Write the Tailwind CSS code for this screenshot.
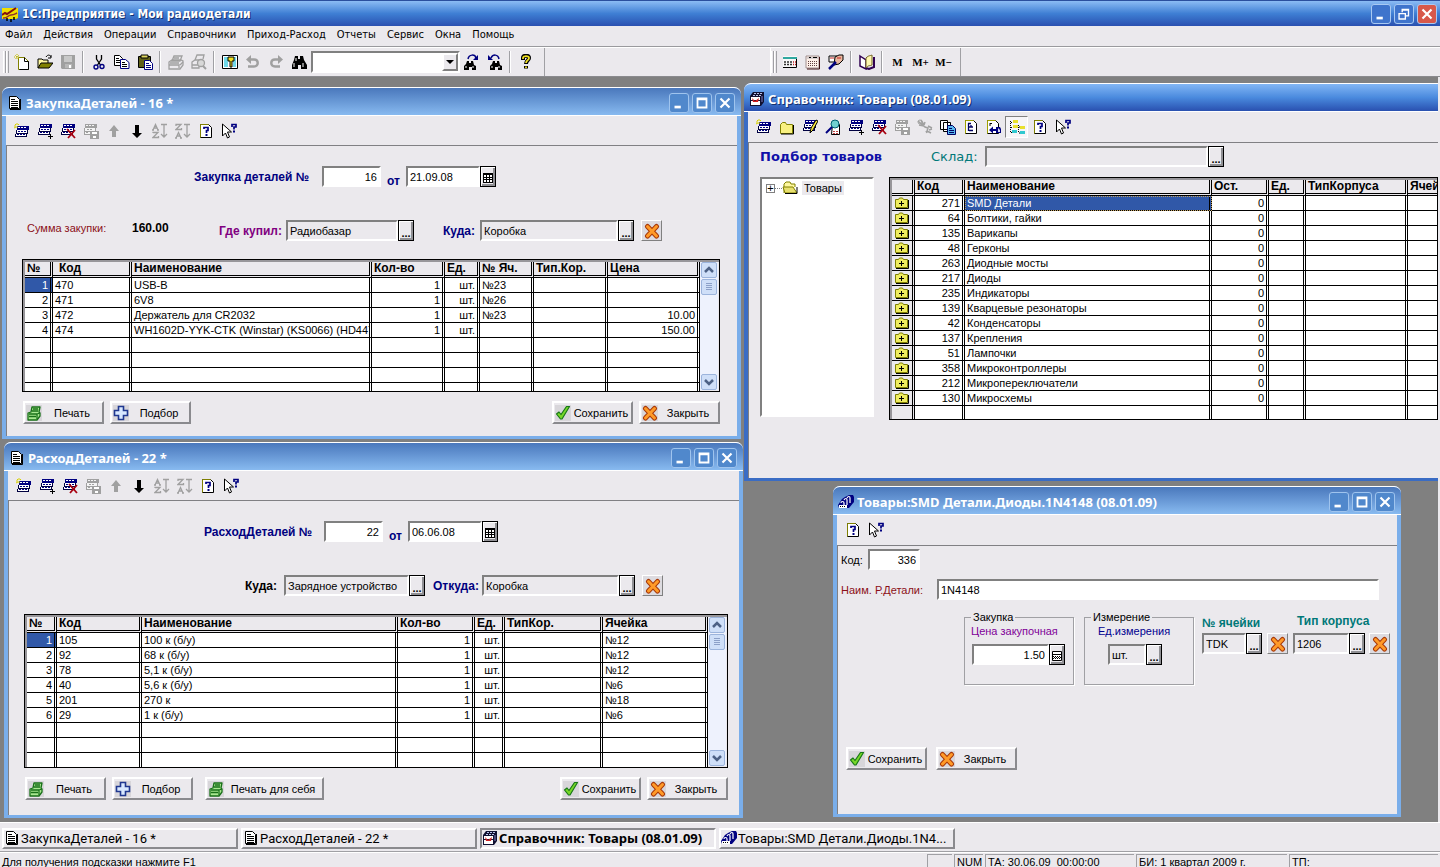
<!DOCTYPE html>
<html lang="ru">
<head>
<meta charset="utf-8">
<title>1С:Предприятие - Мои радиодетали</title>
<script src="https://cdn.jsdelivr.net/npm/@tailwindcss/browser@4"></script>
</head>
<body class="flex h-screen flex-col overflow-hidden bg-[#ebe9ed] font-['Liberation_Sans',sans-serif] text-[11px] leading-[14px] text-black [&_svg]:block [&_svg]:shrink-0">

<svg class="absolute size-0" aria-hidden="true">
  <defs>
  <g id="table-rows" shape-rendering="crispEdges"><path d="M3 1h12v4H3z" fill="#000080"/><path d="M4 2h2v1H4zm3 0h2v1H7zm3 0h2v1h-2z" fill="#fff"/><path d="M2 5h12v4H2zM1 9h12v3H1z" fill="#000040"/><path d="M3 5h10v3H3zM2 9h10v2H2z" fill="#fff"/><path d="M4 6h2v1H4zm3 0h2v1H7zm3 0h2v1h-2zM3 9h2v1H3zm3 0h2v1H6zm3 0h2v1H9z" fill="#000080"/></g>
  <symbol id="i-row-new" viewBox="0 0 16 16"><g transform="translate(0 2)"><use href="#table-rows"/></g><path d="M3 0v2M0 3h2M5 1l-1 1M1 1l1 1M3 3v2M0 5l2-1" stroke="#d8d000" fill="none"/></symbol>
  <symbol id="i-row-add" viewBox="0 0 16 16"><use href="#table-rows"/><path d="M13.500 11v5M11 13.500h5" stroke="#000"/></symbol>
  <symbol id="i-row-del" viewBox="0 0 16 16"><use href="#table-rows"/><path d="M7 6l8 9M15 7l-7 8" stroke="#a80010" stroke-width="1.800"/></symbol>
  <symbol id="i-row-save" viewBox="0 0 16 16"><g shape-rendering="crispEdges"><path d="M2 1h12v4H2zM1 5h12v4H1zM1 9h8v3H1z" fill="#a0a0a0"/><path d="M3 2h2v1H3zm3 0h2v1H6zm3 0h2v1H9zM2 5h10v3H2zM2 9h6v2H2z" fill="#f4f4f4"/><path d="M4 6h2v1H4zm3 0h2v1H7zM3 9h2v1H3z" fill="#a0a0a0"/><path d="M7 8h9v8H7z" fill="#a0a0a0"/><path d="M9 9h5v2H9zM10 13h3v2h-3z" fill="#fff"/></g></symbol>
  <symbol id="i-row-edit" viewBox="0 0 16 16"><use href="#table-rows"/><path d="M14 1L9 9l-1 5 3-3 5-9z" fill="#f8e840" stroke="#000"/></symbol>
  <symbol id="i-up" viewBox="0 0 16 16"><path d="M8 2l5 6h-3v6H6V8H3z" fill="#a0a0a0"/></symbol>
  <symbol id="i-down" viewBox="0 0 16 16"><path d="M8 15l5-5h-3V2H6v8H3z" fill="#000"/></symbol>
  <symbol id="i-az" viewBox="0 0 16 16"><path d="M1 7l2.500-5.500L6 7M2 5h3M0 7h2M5 7h2M1 10v-.500h5L1 14.500h5.500V13M9 1.500h6M12 2v12M9 11l3 3 3-3" fill="none" stroke="#a0a0a0" stroke-width="1.300"/></symbol>
  <symbol id="i-za" viewBox="0 0 16 16"><path d="M1 3V1.500h5L1 6.500h5.500V5M1 15l2.500-5.500L6 15M2 13h3M0 15h2M5 15h2M9 1.500h6M12 2v12M9 11l3 3 3-3" fill="none" stroke="#a0a0a0" stroke-width="1.300"/></symbol>
  <symbol id="i-page-help" viewBox="0 0 16 16"><path d="M2.500 1.500h8l3 3v10h-11z" fill="#fff" stroke="#000"/><path d="M2.500 14.500v-13h8" fill="none" stroke="#808000"/><path d="M6 6V4.500h4v3H8.500V10" fill="none" stroke="#000080" stroke-width="1.700"/><path d="M7.500 11h2v2h-2z" fill="#000080"/></symbol>
  <symbol id="i-cursor-help" viewBox="0 0 16 16"><path d="M1.500 1v12l3-3 2 5 2-1-2-5h4z" fill="#fff" stroke="#000"/><path d="M11 4V1.500h4V4h-2v2.500" fill="none" stroke="#000080" stroke-width="1.700"/><path d="M12 7.500h2v2h-2z" fill="#000080"/></symbol>
  <symbol id="i-doc" viewBox="0 0 16 16"><path d="M2.500 1.500h7l3 3v9h-10z" fill="#fff" stroke="#000"/><path d="M13.500 4v10.500H3" fill="none" stroke="#000"/><path d="M4 4.500h4M4 6.500h7M4 8.500h7M4 10.500h7M4 12.500h7" stroke="#000" shape-rendering="crispEdges"/></symbol>
  <symbol id="i-catalog" viewBox="0 0 16 16"><path d="M4 1h11v10l-3 4H1V5z" fill="#101030"/><path d="M2 6h9v3H2zM2 10h9v4H2z" fill="#fff"/><path d="M5 2.500h9M4 4.500h9" stroke="#b8c0e8" stroke-dasharray="2 1"/><path d="M3 7l3 3 4-3-1 4H4z" fill="#d02020"/><path d="M13 5v6" stroke="#8080c0"/></symbol>
  <symbol id="i-cards" viewBox="0 0 16 16"><path d="M0 11L4 5l3-2 4-2h4l1 2v5l-5 6H1z" fill="#000080"/><path d="M3 9c0-2 3-2 3 0v3M6 6c1-2 3-2 3 0v5M9 4c1-2 3-2 3 0v5" fill="none" stroke="#fff" stroke-width="1.200"/><path d="M1 11h8v3H1z" fill="#fff"/><path d="M2 12.500h6" stroke="#000" stroke-dasharray="1 1"/></symbol>
  <symbol id="i-logo" viewBox="0 0 16 16"><path d="M0 2h16v10l-2 1H0z" fill="#f0e000"/><path d="M0 9l3-2 2 1 9-6" fill="none" stroke="#801010" stroke-width="2"/><path d="M1 12c4 1 5-3 8-3s4-1 6-2" fill="none" stroke="#903030" stroke-width="1.500"/><path d="M5 12v3M9 13v3M12 11v3" stroke="#000" stroke-width="1.500"/></symbol>
  <symbol id="i-new" viewBox="0 0 16 16"><path d="M4.500 3.500h6l4 4v8h-10z" fill="#fff" stroke="#808000"/><path d="M10.500 3.500v4h4v8h-9" fill="none" stroke="#000"/><path d="M3 0v6M0 3h6M1 1l4 4M5 1L1 5" stroke="#c0b800" stroke-dasharray="1 1"/></symbol>
  <symbol id="i-open" viewBox="0 0 16 16"><path d="M1 14V5h4l1 1h5v3" fill="#fff8a0" stroke="#000"/><path d="M1 14l3-5h12l-4 5z" fill="#808000" stroke="#000"/><path d="M9 3c2-3 4-2 5 0M14 1v3h-3" fill="none" stroke="#000"/></symbol>
  <symbol id="i-save" viewBox="0 0 16 16"><path d="M1 1h14v14H2l-1-1z" fill="#a0a0a0"/><path d="M4 2h8v6H4z" fill="#c8c8c8"/><path d="M5 10h7v4H5z" fill="#b8b8b8"/><path d="M9 11h2v3H9z" fill="#fff"/></symbol>
  <symbol id="i-cut" viewBox="0 0 16 16"><path d="M5.500 1v4l4 6M10.500 1v4l-4 6" fill="none" stroke="#000" stroke-width="1.300"/><circle cx="5" cy="13" r="2" fill="none" stroke="#000080" stroke-width="1.400"/><circle cx="11" cy="12.500" r="2" fill="none" stroke="#000080" stroke-width="1.400"/></symbol>
  <symbol id="i-copy" viewBox="0 0 16 16"><path d="M.5 1.500h5l3 3v7h-8z" fill="#fff" stroke="#000"/><path d="M6.500 5.500h5l3.500 3v6h-8.500z" fill="#fff" stroke="#000080"/><path d="M2 4.500h3M2 6.500h4M2 8.500h4M8 8.500h3M8 10.500h5M8 12.500h5" stroke="#000"/></symbol>
  <symbol id="i-paste" viewBox="0 0 16 16"><path d="M1.500 2.500h12v11h-12z" fill="#606018" stroke="#000"/><path d="M4 1h7v3H4z" fill="#e0d860" stroke="#000"/><path d="M7.500 6.500h5l3 3v6h-8z" fill="#fff" stroke="#000080"/><path d="M9 9.500h3M9 11.500h5M9 13.500h5" stroke="#000080"/></symbol>
  <symbol id="i-print" viewBox="0 0 16 16"><path d="M4 7l2-5h8l-2 5zM1 8l3-2h9l2 1v4l-3 4H1z" fill="#ebe9ed" stroke="#a0a0a0" stroke-width="1.300"/><path d="M1 11h10v3M12 11l3-3M6 4h5M2 9h9" fill="none" stroke="#a0a0a0" stroke-width="1.300"/></symbol>
  <symbol id="i-preview" viewBox="0 0 16 16"><path d="M4 6l2-5h7l-1 4M1 8l3-2h4v8H1zM1 11h6" fill="none" stroke="#a0a0a0" stroke-width="1.300"/><circle cx="10" cy="9" r="3.500" fill="#d8d8d8" stroke="#a0a0a0" stroke-width="1.300"/><path d="M12 12l3 3" stroke="#a0a0a0" stroke-width="2"/></symbol>
  <symbol id="i-key" viewBox="0 0 16 16"><path d="M.5 1.500h15v13H.5z" fill="#fff" stroke="#000"/><path d="M2 3h4v10H2zM11 3h3v10h-3z" fill="#70d8e8"/><path d="M6 3h6v4h-2v6H8V7H6z" fill="#f0e020" stroke="#000"/></symbol>
  <symbol id="i-undo" viewBox="0 0 16 16"><path d="M3 12.500h6c5 0 5-7 0-7H5" fill="none" stroke="#a0a0a0" stroke-width="2.400"/><path d="M6 1v9L1 5.500z" fill="#a0a0a0"/></symbol>
  <symbol id="i-redo" viewBox="0 0 16 16"><path d="M12 12.500H7c-5 0-5-7 0-7h3" fill="none" stroke="#a0a0a0" stroke-width="2.400"/><path d="M10 1v9l5-4.500z" fill="#a0a0a0"/></symbol>
  <symbol id="i-find" viewBox="0 0 16 16"><path d="M4 2h3v3h2V2h3l1 4 3 5v4h-6v-4H7v4H1v-4l2-5z" fill="#000"/><path d="M3 9v4M12 9v4M5 4v3" stroke="#fff" stroke-width="1"/></symbol>
  <symbol id="i-find-next" viewBox="0 0 16 16"><path d="M3 7h2v2h2V7h2l1 4 2 1v4H8v-3H5v3H0v-4l2-2z" fill="#000"/><path d="M4 5c1-5 7-5 8-1" fill="none" stroke="#000080" stroke-width="1.500"/><path d="M14 1v5H9z" fill="#000080"/><path d="M2 12v2M9 12v2" stroke="#fff"/></symbol>
  <symbol id="i-find-prev" viewBox="0 0 16 16"><path d="M6 7h2v2h2V7h2l1 4 2 1v4h-4v-3H8v3H3v-4l2-2z" fill="#000"/><path d="M4 4c2-4 7-4 8 1" fill="none" stroke="#000080" stroke-width="1.500"/><path d="M1 1v5h5z" fill="#000080"/><path d="M5 12v2M12 12v2" stroke="#fff"/></symbol>
  <symbol id="i-help" viewBox="0 0 16 16"><path d="M5 6V4c0-3 6-3 6 0 0 2-3 2.500-3 6M8 12v2.500" fill="none" stroke="#000" stroke-width="4"/><path d="M5 5V4c0-2.500 6-2.500 6 0 0 2-3 2.500-3 5M8 12.500v1.500" fill="none" stroke="#f0e020" stroke-width="1.800"/></symbol>
  <symbol id="i-calc" viewBox="0 0 16 16"><path d="M1 2h14v12H1z" fill="#f8f8f8"/><path d="M1 3h14v2H1z" fill="#30a8a0"/><path d="M14.500 5v8.500H1" fill="none" stroke="#000"/><path d="M2 8h8M2 10.500h8" stroke="#303030" stroke-width="1.500" stroke-dasharray="2 1"/><path d="M11 8h3M11 10.500h3" stroke="#c02020" stroke-width="1.500" stroke-dasharray="1 1"/></symbol>
  <symbol id="i-calendar" viewBox="0 0 16 16"><path d="M1 2h13v12H1z" fill="#fff0e8" stroke="#a09090"/><path d="M2 3h11v2H2z" fill="#d8d0d0"/><path d="M4 3.500h2M8 3.500h4" stroke="#000"/><path d="M3 7.500h10M3 9.500h10M3 11.500h10" stroke="#604040" stroke-dasharray="1 1"/><path d="M14.500 3v12H2" fill="none" stroke="#401010"/></symbol>
  <symbol id="i-syntax" viewBox="0 0 16 16"><path d="M1 2h8v6H1z" fill="#fff" stroke="#000"/><path d="M7 3l4-2h4v5l-4 4-5 1z" fill="#e8b8a0" stroke="#000"/><path d="M2 4h4M9 4h4" stroke="#c02020"/><path d="M8 8l-7 7" stroke="#000080" stroke-width="2.500"/></symbol>
  <symbol id="i-book" viewBox="0 0 16 16"><path d="M1 2l6 4v9l-6-3z" fill="#fff" stroke="#300050" stroke-width="1.500"/><path d="M15 3v10l-5 2-3-1" fill="none" stroke="#300050" stroke-width="2"/><path d="M7 4c3-3 4-2 6-3v10c-2 1-4 0-6 3z" fill="#fff8b0" stroke="#706020"/></symbol>
  <symbol id="i-folder" viewBox="0 0 16 16"><path d="M1.500 5.500l2-2h3l1 2h6v9h-12z" fill="#f8f080" stroke="#808000"/><path d="M14.500 6v9H2" fill="none" stroke="#000"/></symbol>
  <symbol id="i-view" viewBox="0 0 16 16"><path d="M7.500 5.500h7v10h-8z" fill="#fff" stroke="#000"/><path d="M8 12.500h6M8 14.500h6" stroke="#c04040" stroke-dasharray="2 1"/><circle cx="10" cy="5" r="4" fill="#70d0d0" stroke="#006070"/><path d="M7 8l-6 6" stroke="#000080" stroke-width="2"/></symbol>
  <symbol id="i-history" viewBox="0 0 16 16"><path d="M1 2l7 6 3 1-1 3 4 2M2 6l5 1M4 1l3 5M8 3l-1 3M11 7l4 2M12 11l3-1M9 12l1 2" fill="none" stroke="#a0a0a0" stroke-width="1.500"/><circle cx="3" cy="3" r="2" fill="none" stroke="#a0a0a0"/></symbol>
  <symbol id="i-pages" viewBox="0 0 16 16"><path d="M.5 1.500h7v9h-7zM3.500 3.500h7v9h-7z" fill="#fff" stroke="#000"/><path d="M7.500 6.500h5l3 3v6h-8z" fill="#58b8f0" stroke="#000060"/><path d="M9 9.500h3M9 11.500h5M9 13.500h5" stroke="#000060"/></symbol>
  <symbol id="i-page-tree" viewBox="0 0 16 16"><path d="M2.500 1.500h8l3 3v10h-11z" fill="#fff" stroke="#000"/><path d="M2.500 14.500v-13h8" fill="none" stroke="#a0a000"/><path d="M5.500 4v8M5 4.500h3M6 8h4M6 11.500h4M8 6v2" stroke="#000060" stroke-width="1.300" fill="none"/></symbol>
  <symbol id="i-page-go" viewBox="0 0 16 16"><path d="M1.500 1.500h8l3 3v10h-11z" fill="#fff" stroke="#000"/><path d="M1.500 14.500v-13h8" fill="none" stroke="#a0a000"/><path d="M4 4v3M4 4.500h2" stroke="#000"/><path d="M3 11l4-3.500V10h3V8h4l1 2v4h-5v-2H7v2.500z" fill="#000080"/><path d="M12 9l2 2v2h-2z" fill="#d8d8e8"/></symbol>
  <symbol id="i-tree" viewBox="0 0 16 16"><path d="M1.500 2v11M2 3.500h2M2 8.500h2M2 13.500h2M9.500 6v7M10 8h2M10 14h2" stroke="#000" stroke-dasharray="1 1"/><path d="M4 1h5v3H4zM4 6h5v3H4zM11 7h5v3h-5z" fill="#e8e030"/><path d="M3 11h5v3H3zM11 12h5v3h-5z" fill="#30c8d0"/></symbol>
  <symbol id="i-x" viewBox="0 0 16 16"><path d="M3.500 3.500l9 9.500M12.500 3.500L3.500 13" stroke="#a83808" stroke-width="5" stroke-linecap="round"/><path d="M3.500 3.500l9 9.500M12.500 3.500L3.500 13" stroke="#ff9a28" stroke-width="3" stroke-linecap="round"/></symbol>
  <symbol id="i-check" viewBox="0 0 16 16"><path d="M1.500 9l4 5 1.500 0L14.500 1.500l-3 0L6 9.500 4 7z" fill="#78d828" stroke="#187818" stroke-width="1.200" stroke-linejoin="round"/></symbol>
  <symbol id="i-plus" viewBox="0 0 16 16"><path d="M5.500 1.500h5v4h4v5h-4v4h-5v-4h-4v-5h4z" fill="#d8e8ff" stroke="#203890" stroke-width="1.600"/></symbol>
  <symbol id="i-print-green" viewBox="0 0 16 16"><path d="M2 14V8l3-1 1-5h8l-1 5 1 1v3l-3 4H2z" fill="#a8e890" stroke="#187018" stroke-width="1.300" stroke-linejoin="round"/><path d="M7 4h5M6 6h6M3 9h8v5M3 11.500h7M11 9l3-1" fill="none" stroke="#187018" stroke-width="1.300"/></symbol>
  <symbol id="i-folder-plus" viewBox="0 0 14 12"><path d="M.5 2.500h3l1-1.500h3l1 1.500h4v8H.5z" fill="#f0ec60" stroke="#808000"/><path d="M13.500 3v8.500H1" fill="none" stroke="#000"/><path d="M6.500 4v5M4 6.500h5" stroke="#000" shape-rendering="crispEdges"/></symbol>
  <symbol id="i-folder-open" viewBox="0 0 16 14"><path d="M2 12V3l2-2h4l1 2h4v3" fill="#fff8a0" stroke="#808000"/><path d="M3 12L1 6h10l4 6z" fill="#e8e070" stroke="#808000"/><path d="M3 12.500h12V6" fill="none" stroke="#000"/></symbol>
  <symbol id="i-min" viewBox="0 0 20 20"><path d="M5 13h7v3H5z" fill="#fff"/></symbol>
  <symbol id="i-max" viewBox="0 0 20 20"><path d="M4 4h12v12H4zM6 7v7h8V7z" fill="#fff" fill-rule="evenodd"/></symbol>
  <symbol id="i-restore" viewBox="0 0 20 20"><path d="M4.500 9.500h7v6h-7zM8 8V5h7v7h-3M7.500 5.500h8M4 9.500h8" fill="none" stroke="#fff" stroke-width="1.500"/></symbol>
  <symbol id="i-close" viewBox="0 0 20 20"><path d="M5 5l10 10M15 5L5 15" stroke="#fff" stroke-width="2.400"/></symbol>
  <symbol id="i-chev-up" viewBox="0 0 14 14"><path d="M3 9l4-4 4 4" fill="none" stroke="#4d6185" stroke-width="2.500"/></symbol>
  <symbol id="i-chev-down" viewBox="0 0 14 14"><path d="M3 5l4 4 4-4" fill="none" stroke="#4d6185" stroke-width="2.500"/></symbol>
  <symbol id="i-thumb" viewBox="0 0 14 14"><path d="M4 3.500h6M4 5.500h6M4 7.500h6M4 9.500h6" stroke="#8ca0c8"/></symbol>
  <symbol id="i-grid" viewBox="0 0 10 10"><g shape-rendering="crispEdges"><path d="M0 0h10v10H0z" fill="#000"/><path d="M1 2h2v2H1zM4 2h2v2H4zM7 2h2v2H7zM1 5h2v1H1zM4 5h2v1H4zM7 5h2v1H7zM1 7h2v2H1zM4 7h2v2H4zM7 7h2v2H7z" fill="#fff"/></g></symbol>
  <symbol id="i-calc-mini" viewBox="0 0 10 10"><path d="M.5 .5h9v9h-9z" fill="#fff" stroke="#000"/><path d="M1 3.500h8" stroke="#000"/><path d="M1 5.500h8M2 6.500h7M1 7.500h8" stroke="#000" stroke-dasharray="1 1"/></symbol>
  </defs>
</svg>

<header class="flex h-[26px] shrink-0 items-center border-t border-[#2b4f9e] bg-linear-to-b from-[#8cbcf4] via-[#3f7fd4] to-[#2a50b0] pr-[3px] pl-[2px]">
  <svg class="mr-1 size-4"><use href="#i-logo"/></svg>
  <h1 class="flex-1 font-['DejaVu_Sans_Condensed','Noto_Sans',sans-serif] text-[12px] font-bold text-white text-shadow-[1px_1px_0_#15306e]">1С:Предприятие - Мои радиодетали</h1>
  <div class="flex gap-[3px] [&_svg]:size-[18px] [&>button]:size-5 [&>button]:rounded-[3px] [&>button]:border [&>button]:border-[#a9c9f2]">
    <button aria-label="Свернуть" class="bg-[#3f74cc]"><svg><use href="#i-min"/></svg></button>
    <button aria-label="Восстановить" class="bg-[#3f74cc]"><svg><use href="#i-restore"/></svg></button>
    <button aria-label="Закрыть программу" class="bg-[#d8584a]"><svg><use href="#i-close"/></svg></button>
  </div>
</header>

<nav class="flex h-[21px] shrink-0 items-center gap-[11px] border-b border-[#9a9a9e] pb-[2px] pl-[5px] font-['DejaVu_Sans_Condensed','Noto_Sans',sans-serif]">
  <button>Файл</button><button>Действия</button><button>Операции</button><button>Справочники</button><button>Приход-Расход</button><button>Отчеты</button><button>Сервис</button><button>Окна</button><button>Помощь</button>
</nav>

<div class="flex h-[30px] shrink-0 items-stretch border-t border-b border-t-white border-b-[#8a8a8e] [&_.grip]:my-[3px] [&_.grip]:w-[3px] [&_.grip]:border-r [&_.grip]:border-l [&_.grip]:border-l-white [&_.grip]:border-r-[#a0a0a4] [&_.sep]:mx-[3px] [&_.sep]:my-[3px] [&_.sep]:w-[2px] [&_.sep]:border-r [&_.sep]:border-l [&_.sep]:border-l-[#a0a0a4] [&_.sep]:border-r-white [&_.tool]:flex [&_.tool]:w-[23px] [&_.tool]:items-center [&_.tool]:justify-center [&_.tool_svg]:size-4">
  <div role="toolbar" aria-label="Стандартная" class="flex w-[545px] shrink-0 items-stretch border-r border-[#a0a0a4] pl-[3px]">
    <span class="grip"></span><span class="grip mr-[1px]"></span>
    <button class="tool" aria-label="Новый"><svg><use href="#i-new"/></svg></button>
    <button class="tool" aria-label="Открыть"><svg><use href="#i-open"/></svg></button>
    <button class="tool" aria-label="Записать"><svg><use href="#i-save"/></svg></button>
    <span class="sep"></span>
    <button class="tool" aria-label="Вырезать"><svg><use href="#i-cut"/></svg></button>
    <button class="tool" aria-label="Копировать"><svg><use href="#i-copy"/></svg></button>
    <button class="tool" aria-label="Вставить"><svg><use href="#i-paste"/></svg></button>
    <span class="sep"></span>
    <button class="tool" aria-label="Печать документа"><svg><use href="#i-print"/></svg></button>
    <button class="tool" aria-label="Просмотр"><svg><use href="#i-preview"/></svg></button>
    <span class="sep"></span>
    <button class="tool" aria-label="Монитор"><svg><use href="#i-key"/></svg></button>
    <button class="tool" aria-label="Отменить"><svg><use href="#i-undo"/></svg></button>
    <button class="tool" aria-label="Повторить"><svg><use href="#i-redo"/></svg></button>
    <button class="tool" aria-label="Найти"><svg><use href="#i-find"/></svg></button>
    <div class="my-[3px] ml-[1px] flex w-[149px] border-2 border-t-[#808080] border-r-white border-b-white border-l-[#808080] bg-white">
      <input aria-label="Строка поиска" class="w-full min-w-0 flex-1 px-1 outline-none">
      <button aria-label="Список" class="flex w-4 items-center justify-center border-2 border-t-white border-r-[#808080] border-b-[#808080] border-l-white bg-[#ebe9ed]"><span class="border-x-4 border-t-4 border-x-transparent border-t-black"></span></button>
    </div>
    <button class="tool" aria-label="Найти далее"><svg><use href="#i-find-next"/></svg></button>
    <button class="tool" aria-label="Найти назад"><svg><use href="#i-find-prev"/></svg></button>
    <span class="sep"></span>
    <button class="tool" aria-label="Помощь"><svg><use href="#i-help"/></svg></button>
  </div>
  <div class="w-[226px] shrink-0 border-r border-white"></div>
  <div role="toolbar" aria-label="Калькулятор" class="flex shrink-0 items-stretch border-r border-[#a0a0a4] pr-[5px] font-['Liberation_Serif',serif] font-bold">
    <span class="grip"></span><span class="grip mr-[1px]"></span>
    <button class="tool" aria-label="Калькулятор"><svg><use href="#i-calc"/></svg></button>
    <button class="tool" aria-label="Календарь"><svg><use href="#i-calendar"/></svg></button>
    <button class="tool" aria-label="Синтакс-помощник"><svg><use href="#i-syntax"/></svg></button>
    <span class="sep"></span>
    <button class="tool" aria-label="Описание"><svg><use href="#i-book"/></svg></button>
    <span class="sep"></span>
    <button class="tool">M</button><button class="tool">M+</button><button class="tool">M−</button>
  </div>
</div>

<main class="relative mr-[2px] min-h-0 flex-1 overflow-hidden bg-[#808080]
 [&_section]:absolute [&_section]:flex [&_section]:flex-col [&_section]:rounded-t-[7px] [&_section]:border-[#7aaeea]
 [&_.bar]:flex [&_.bar]:h-[29px] [&_.bar]:shrink-0 [&_.bar]:items-center [&_.bar]:border-b [&_.bar]:border-white [&_.bar]:pt-[2px] [&_.bar]:pr-[3px] [&_.bar]:pl-[5px] [&_.bar]:text-white
 [&_.bar_svg]:size-4 [&_h2]:ml-[3px] [&_h2]:flex-1 [&_h2]:font-['Noto_Sans',sans-serif] [&_h2]:text-[13px] [&_h2]:leading-[18px] [&_h2]:font-bold
 [&_.wb]:mr-[3px] [&_.wb]:size-5 [&_.wb]:rounded-[3px] [&_.wb]:border [&_.wb]:border-[#9fc4ee] [&_.wb]:bg-[#5088cc] [&_.wb_svg]:size-[18px]
 [&_.tools]:flex [&_.tools]:shrink-0 [&_.tools]:border-b [&_.tools]:border-[#808084] [&_.tools]:pl-1
 [&_.tools>button]:flex [&_.tools>button]:w-[23px] [&_.tools>button]:items-center [&_.tools>button]:justify-center [&_.tools_svg]:size-4
 [&_form]:flex-1 [&_form]:border-l [&_form]:border-[#808084]
 [&_label]:shrink-0
 [&_input]:h-[21px] [&_input]:min-w-0 [&_input]:border-2 [&_input]:border-t-[#808080] [&_input]:border-l-[#808080] [&_input]:border-r-white [&_input]:border-b-white [&_input]:px-[2px] [&_input]:outline-none
 [&_.pick]:flex [&_.pick]:h-[21px] [&_.pick]:w-4 [&_.pick]:shrink-0 [&_.pick]:items-end [&_.pick]:justify-center [&_.pick]:border [&_.pick]:border-black [&_.pick]:bg-[#ebe9ed] [&_.pick]:pb-[3px] [&_.pick]:font-['Liberation_Sans',sans-serif] [&_.pick]:text-[11px] [&_.pick]:font-bold [&_.pick]:leading-[8px] [&_.pick]:text-black [&_.pick]:shadow-[inset_1px_1px_0_#fff,inset_-2px_-2px_0_#909094] [&_.pick_svg]:size-[10px]
 [&_.clear]:flex [&_.clear]:size-[21px] [&_.clear]:shrink-0 [&_.clear]:items-center [&_.clear]:justify-center [&_.clear]:border [&_.clear]:border-t-white [&_.clear]:border-l-white [&_.clear]:border-r-[#808080] [&_.clear]:border-b-[#808080] [&_.clear]:bg-[#dddbe0] [&_.clear_svg]:size-4
 [&_.btn]:flex [&_.btn]:h-[23px] [&_.btn]:w-[81px] [&_.btn]:shrink-0 [&_.btn]:items-center [&_.btn]:border-2 [&_.btn]:border-t-white [&_.btn]:border-l-white [&_.btn]:border-r-[#8a8a8e] [&_.btn]:border-b-[#8a8a8e] [&_.btn]:pl-[1px] [&_.btn_svg]:size-4 [&_.btn_svg]:bg-[#d8d6da] [&_.btn>span]:flex-1 [&_.btn>span]:text-center
 [&_.grid-box]:flex [&_.grid-box]:overflow-hidden [&_.grid-box]:border [&_.grid-box]:border-black [&_.grid-box]:bg-[#ebe9ed] [&_.grid-box]:pt-[2px] [&_.grid-box]:pl-[2px] [&_.grid-box]:pb-[1px] [&_.grid-box]:shadow-[inset_2px_2px_0_#98969a]
 [&_table]:table-fixed [&_table]:border-separate [&_table]:border-spacing-0 [&_table]:self-start
 [&_th]:h-4 [&_th]:overflow-hidden [&_th]:border-r-3 [&_th]:border-b-3 [&_th]:border-double [&_th]:border-black [&_th]:bg-[#ebe9ed] [&_th]:p-0 [&_th]:pl-[2px] [&_th]:text-left [&_th]:text-[12px] [&_th]:leading-[13px] [&_th]:font-bold [&_th]:whitespace-nowrap
 [&_td]:h-[15px] [&_td]:overflow-hidden [&_td]:border-r-3 [&_td]:border-b [&_td]:border-black [&_td]:[border-right-style:double] [&_td]:bg-white [&_td]:p-0 [&_td]:px-[2px] [&_td]:whitespace-nowrap
 [&_.r]:text-right [&_td.sel]:bg-[#3058a8] [&_td.sel]:text-white
 [&_.sb]:flex [&_.sb]:w-[18px] [&_.sb]:shrink-0 [&_.sb]:flex-col [&_.sb]:bg-[#eef2fd] [&_.sb]:px-[1px] [&_.sb_button]:flex [&_.sb_button]:h-4 [&_.sb_button]:w-full [&_.sb_button]:items-center [&_.sb_button]:justify-center [&_.sb_button]:rounded-[2px] [&_.sb_button]:border [&_.sb_button]:border-[#9cb4dc] [&_.sb_button]:bg-[#cfdff8] [&_.sb_svg]:size-[14px]
">

  <!-- Закупка -->
  <section class="top-[10px] left-[2px] h-[352px] w-[739px] border-x-4 border-b-3 bg-[#ebe9ed]">
    <div class="bar -mx-1 rounded-t-[7px] border-t border-t-[#a8ccf4] bg-linear-to-b from-[#4a78bc] to-[#88baf0]">
      <svg><use href="#i-doc"/></svg><h2>ЗакупкаДеталей - 16 *</h2>
      <button class="wb" aria-label="Свернуть"><svg><use href="#i-min"/></svg></button><button class="wb" aria-label="Развернуть"><svg><use href="#i-max"/></svg></button><button class="wb" aria-label="Закрыть окно"><svg><use href="#i-close"/></svg></button>
    </div>
    <div class="tools h-[30px]" role="toolbar" aria-label="Строки закупки">
      <button aria-label="Новая строка"><svg><use href="#i-row-new"/></svg></button><button aria-label="Добавить"><svg><use href="#i-row-add"/></svg></button><button aria-label="Удалить"><svg><use href="#i-row-del"/></svg></button><button aria-label="Записать"><svg><use href="#i-row-save"/></svg></button><button aria-label="Вверх"><svg><use href="#i-up"/></svg></button><button aria-label="Вниз"><svg><use href="#i-down"/></svg></button><button aria-label="По возрастанию"><svg><use href="#i-az"/></svg></button><button aria-label="По убыванию"><svg><use href="#i-za"/></svg></button><button aria-label="Описание"><svg><use href="#i-page-help"/></svg></button><button aria-label="Помощь"><svg><use href="#i-cursor-help"/></svg></button>
    </div>
    <form class="flex flex-col pr-[17px] pl-[15px]">
      <div class="mt-5 flex items-center pl-[172px] text-[12px] font-bold text-[#000080] [&>input]:text-[11px] [&>input]:font-normal [&>input]:text-black">
        <label for="n1" class="w-[128px]">Закупка деталей №</label>
        <input id="n1" value="16" class="w-[59px] bg-white text-right">
        <label for="d1" class="w-[25px] pt-[9px] text-center leading-3">от</label>
        <input id="d1" value="21.09.08" class="w-[74px] bg-white">
        <button type="button" class="pick" aria-label="Календарь"><svg><use href="#i-grid"/></svg></button>
      </div>
      <div class="mt-[33px] flex items-center pl-[5px]">
        <span class="w-[105px] pb-[6px] text-[#8c1018]">Сумма закупки:</span>
        <output class="w-[87px] pb-[6px] text-[12px] font-bold">160.00</output>
        <label for="w1" class="w-[67px] text-[12px] font-bold text-[#800080]">Где купил:</label>
        <input id="w1" value="Радиобазар" class="w-[112px]">
        <button type="button" class="pick" aria-label="Выбрать место">...</button>
        <label for="t1" class="ml-[29px] w-[37px] text-[12px] font-bold text-[#000080]">Куда:</label>
        <input id="t1" value="Коробка" class="w-[138px]">
        <button type="button" class="pick" aria-label="Выбрать склад">...</button>
        <button type="button" class="clear ml-[7px]" aria-label="Очистить"><svg><use href="#i-x"/></svg></button>
      </div>
      <div class="grid-box mt-[18px] h-[133px]">
        <table class="w-[675px]">
          <colgroup><col class="w-[28px]"><col class="w-[79px]"><col class="w-[240px]"><col class="w-[73px]"><col class="w-[35px]"><col class="w-[54px]"><col class="w-[74px]"><col class="w-[92px]"></colgroup>
          <thead><tr><th>№</th><th><span class="ml-1">Код</span></th><th>Наименование</th><th>Кол-во</th><th>Ед.</th><th>№ Яч.</th><th>Тип.Кор.</th><th>Цена</th></tr></thead>
          <tbody>
            <tr><td class="r sel">1</td><td>470</td><td>USB-B</td><td class="r">1</td><td class="r">шт.</td><td>№23</td><td></td><td></td></tr>
            <tr><td class="r">2</td><td>471</td><td>6V8</td><td class="r">1</td><td class="r">шт.</td><td>№26</td><td></td><td></td></tr>
            <tr><td class="r">3</td><td>472</td><td>Держатель для CR2032</td><td class="r">1</td><td class="r">шт.</td><td>№23</td><td></td><td class="r">10.00</td></tr>
            <tr><td class="r">4</td><td>474</td><td>WH1602D-YYK-CTK (Winstar) (KS0066) (HD4478</td><td class="r">1</td><td class="r">шт.</td><td></td><td></td><td class="r">150.00</td></tr>
            <tr><td></td><td></td><td></td><td></td><td></td><td></td><td></td><td></td></tr>
            <tr><td></td><td></td><td></td><td></td><td></td><td></td><td></td><td></td></tr>
            <tr><td></td><td></td><td></td><td></td><td></td><td></td><td></td><td></td></tr>
            <tr><td></td><td></td><td></td><td></td><td></td><td></td><td></td><td></td></tr>
          </tbody>
        </table>
        <div class="sb"><button type="button" aria-label="Прокрутить вверх"><svg><use href="#i-chev-up"/></svg></button><button type="button" aria-label="Ползунок" class="mt-[1px] mb-auto"><svg><use href="#i-thumb"/></svg></button><button type="button" aria-label="Прокрутить вниз"><svg><use href="#i-chev-down"/></svg></button></div>
      </div>
      <div class="mt-[9px] flex gap-[6px] pl-[1px]">
        <button type="button" class="btn"><svg><use href="#i-print-green"/></svg><span>Печать</span></button>
        <button type="button" class="btn"><svg><use href="#i-plus"/></svg><span>Подбор</span></button>
        <button type="button" class="btn ml-auto"><svg><use href="#i-check"/></svg><span>Сохранить</span></button>
        <button type="button" class="btn"><svg><use href="#i-x"/></svg><span>Закрыть</span></button>
      </div>
    </form>
  </section>

  <!-- Расход -->
  <section class="top-[365px] left-1 h-[376px] w-[739px] border-x-4 border-b-3 bg-[#ebe9ed]">
    <div class="bar -mx-1 rounded-t-[7px] border-t border-t-[#a8ccf4] bg-linear-to-b from-[#4a78bc] to-[#88baf0]">
      <svg><use href="#i-doc"/></svg><h2>РасходДеталей - 22 *</h2>
      <button class="wb" aria-label="Свернуть"><svg><use href="#i-min"/></svg></button><button class="wb" aria-label="Развернуть"><svg><use href="#i-max"/></svg></button><button class="wb" aria-label="Закрыть окно"><svg><use href="#i-close"/></svg></button>
    </div>
    <div class="tools h-[30px]" role="toolbar" aria-label="Строки расхода">
      <button aria-label="Новая строка"><svg><use href="#i-row-new"/></svg></button><button aria-label="Добавить"><svg><use href="#i-row-add"/></svg></button><button aria-label="Удалить"><svg><use href="#i-row-del"/></svg></button><button aria-label="Записать"><svg><use href="#i-row-save"/></svg></button><button aria-label="Вверх"><svg><use href="#i-up"/></svg></button><button aria-label="Вниз"><svg><use href="#i-down"/></svg></button><button aria-label="По возрастанию"><svg><use href="#i-az"/></svg></button><button aria-label="По убыванию"><svg><use href="#i-za"/></svg></button><button aria-label="Описание"><svg><use href="#i-page-help"/></svg></button><button aria-label="Помощь"><svg><use href="#i-cursor-help"/></svg></button>
    </div>
    <form class="flex flex-col pr-[11px] pl-[15px]">
      <div class="mt-5 flex items-center pl-[180px] text-[12px] font-bold text-[#000080] [&>input]:text-[11px] [&>input]:font-normal [&>input]:text-black">
        <label for="n2" class="w-[120px]">РасходДеталей №</label>
        <input id="n2" value="22" class="w-[59px] bg-white text-right">
        <label for="d2" class="w-[25px] pt-[9px] text-center leading-3">от</label>
        <input id="d2" value="06.06.08" class="w-[74px] bg-white">
        <button type="button" class="pick" aria-label="Календарь"><svg><use href="#i-grid"/></svg></button>
      </div>
      <div class="mt-[33px] flex items-center pl-[221px]">
        <label for="w2" class="w-[39px] text-[12px] font-bold">Куда:</label>
        <input id="w2" value="Зарядное устройство" class="w-[125px]">
        <button type="button" class="pick" aria-label="Выбрать назначение">...</button>
        <label for="t2" class="ml-2 w-[49px] text-[12px] font-bold text-[#000080]">Откуда:</label>
        <input id="t2" value="Коробка" class="w-[137px]">
        <button type="button" class="pick" aria-label="Выбрать склад">...</button>
        <button type="button" class="clear ml-[7px]" aria-label="Очистить"><svg><use href="#i-x"/></svg></button>
      </div>
      <div class="grid-box mt-[18px] h-[154px]">
        <table class="w-[681px]">
          <colgroup><col class="w-[30px]"><col class="w-[85px]"><col class="w-[256px]"><col class="w-[77px]"><col class="w-[30px]"><col class="w-[98px]"><col class="w-[105px]"></colgroup>
          <thead><tr><th>№</th><th>Код</th><th>Наименование</th><th>Кол-во</th><th>Ед.</th><th>ТипКор.</th><th>Ячейка</th></tr></thead>
          <tbody>
            <tr><td class="r sel">1</td><td>105</td><td>100 к (б/у)</td><td class="r">1</td><td class="r">шт.</td><td></td><td>№12</td></tr>
            <tr><td class="r">2</td><td>92</td><td>68 к (б/у)</td><td class="r">1</td><td class="r">шт.</td><td></td><td>№12</td></tr>
            <tr><td class="r">3</td><td>78</td><td>5,1 к (б/у)</td><td class="r">1</td><td class="r">шт.</td><td></td><td>№12</td></tr>
            <tr><td class="r">4</td><td>40</td><td>5,6 к (б/у)</td><td class="r">1</td><td class="r">шт.</td><td></td><td>№6</td></tr>
            <tr><td class="r">5</td><td>201</td><td>270 к</td><td class="r">1</td><td class="r">шт.</td><td></td><td>№18</td></tr>
            <tr><td class="r">6</td><td>29</td><td>1 к (б/у)</td><td class="r">1</td><td class="r">шт.</td><td></td><td>№6</td></tr>
            <tr><td></td><td></td><td></td><td></td><td></td><td></td><td></td></tr>
            <tr><td></td><td></td><td></td><td></td><td></td><td></td><td></td></tr>
            <tr><td></td><td></td><td></td><td></td><td></td><td></td><td></td></tr>
          </tbody>
        </table>
        <div class="sb"><button type="button" aria-label="Прокрутить вверх"><svg><use href="#i-chev-up"/></svg></button><button type="button" aria-label="Ползунок" class="mt-[1px] mb-auto"><svg><use href="#i-thumb"/></svg></button><button type="button" aria-label="Прокрутить вниз"><svg><use href="#i-chev-down"/></svg></button></div>
      </div>
      <div class="mt-[9px] flex gap-[6px] pl-[1px]">
        <button type="button" class="btn"><svg><use href="#i-print-green"/></svg><span>Печать</span></button>
        <button type="button" class="btn"><svg><use href="#i-plus"/></svg><span>Подбор</span></button>
        <button type="button" class="btn ml-[6px] min-w-[119px]"><svg><use href="#i-print-green"/></svg><span>Печать для себя</span></button>
        <button type="button" class="btn ml-auto"><svg><use href="#i-check"/></svg><span>Сохранить</span></button>
        <button type="button" class="btn"><svg><use href="#i-x"/></svg><span>Закрыть</span></button>
      </div>
    </form>
  </section>

  <!-- Справочник -->
  <section class="top-[6px] right-0 left-[744px] h-[398px] rounded-tr-none! border-b-3 border-l-4 border-[#3a6cc4]! bg-[#ebe9ed]">
    <div class="bar -ml-1 rounded-tl-[7px] border-t border-t-[#2b4f9e] bg-linear-to-b from-[#82b6f4] via-[#4a8ade] to-[#2a50b0] text-shadow-[1px_1px_0_#15306e]">
      <svg><use href="#i-catalog"/></svg><h2>Справочник: Товары (08.01.09)</h2>
    </div>
    <div class="tools h-[31px]" role="toolbar" aria-label="Справочник">
      <button aria-label="Новая строка"><svg><use href="#i-row-new"/></svg></button><button aria-label="Новая группа"><svg><use href="#i-folder"/></svg></button><button aria-label="Изменить"><svg><use href="#i-row-edit"/></svg></button><button aria-label="Просмотр"><svg><use href="#i-view"/></svg></button><button aria-label="Добавить"><svg><use href="#i-row-add"/></svg></button><button aria-label="Удалить"><svg><use href="#i-row-del"/></svg></button><button aria-label="Записать"><svg><use href="#i-row-save"/></svg></button><button aria-label="История"><svg><use href="#i-history"/></svg></button><button aria-label="Копировать"><svg><use href="#i-pages"/></svg></button><button aria-label="Группа"><svg><use href="#i-page-tree"/></svg></button><button aria-label="Перенести"><svg><use href="#i-page-go"/></svg></button><button aria-label="По группам" aria-pressed="true" class="my-1 border border-t-[#808080] border-r-white border-b-white border-l-[#808080] bg-[#f6f5f8]"><svg><use href="#i-tree"/></svg></button><button aria-label="Описание"><svg><use href="#i-page-help"/></svg></button><button aria-label="Помощь"><svg><use href="#i-cursor-help"/></svg></button>
    </div>
    <form class="flex flex-col pl-[11px]">
      <div class="mt-[3px] flex items-center font-['DejaVu_Sans',sans-serif] text-[13px] font-bold">
        <h3 class="w-[171px] text-[#1010a8]">Подбор товаров</h3>
        <label for="st" class="w-[54px] font-normal text-[#007878]">Склад:</label>
        <input id="st" class="w-[223px]">
        <button type="button" class="pick" aria-label="Выбрать склад">...</button>
      </div>
      <div class="mt-[10px] flex gap-[15px]">
        <ul class="h-[240px] w-[114px] shrink-0 border-2 border-t-[#808080] border-r-white border-b-white border-l-[#808080] bg-white pt-[2px] pl-1">
          <li class="flex items-center">
            <button type="button" aria-label="Развернуть Товары" class="flex size-[9px] items-center justify-center border border-[#808080] leading-[7px]">+</button>
            <span class="w-[7px] border-t border-dotted border-[#808080]"></span>
            <svg class="h-[14px] w-4"><use href="#i-folder-open"/></svg>
            <span class="ml-1 bg-[#ebe9ed] px-[2px]">Товары</span>
          </li>
        </ul>
        <div class="grid-box h-[243px] min-w-0 flex-1 border-r-0">
          <table class="w-[608px] shrink-0 [&_td:first-child]:bg-[#ebe9ed] [&_td:first-child_svg]:mx-auto [&_td:first-child_svg]:h-3 [&_td:first-child_svg]:w-[14px]">
            <colgroup><col class="w-[23px]"><col class="w-[50px]"><col class="w-[247px]"><col class="w-[57px]"><col class="w-[37px]"><col class="w-[102px]"><col class="w-[92px]"></colgroup>
            <thead><tr><th></th><th>Код</th><th>Наименование</th><th>Ост.</th><th>Ед.</th><th>ТипКорпуса</th><th>Ячейка</th></tr></thead>
            <tbody>
              <tr><td><svg><use href="#i-folder-plus"/></svg></td><td class="r">271</td><td class="sel outline-1 -outline-offset-1 outline-dotted outline-[#c0a060]">SMD Детали</td><td class="r">0</td><td></td><td></td><td></td></tr>
              <tr><td><svg><use href="#i-folder-plus"/></svg></td><td class="r">64</td><td>Болтики, гайки</td><td class="r">0</td><td></td><td></td><td></td></tr>
              <tr><td><svg><use href="#i-folder-plus"/></svg></td><td class="r">135</td><td>Варикапы</td><td class="r">0</td><td></td><td></td><td></td></tr>
              <tr><td><svg><use href="#i-folder-plus"/></svg></td><td class="r">48</td><td>Герконы</td><td class="r">0</td><td></td><td></td><td></td></tr>
              <tr><td><svg><use href="#i-folder-plus"/></svg></td><td class="r">263</td><td>Диодные мосты</td><td class="r">0</td><td></td><td></td><td></td></tr>
              <tr><td><svg><use href="#i-folder-plus"/></svg></td><td class="r">217</td><td>Диоды</td><td class="r">0</td><td></td><td></td><td></td></tr>
              <tr><td><svg><use href="#i-folder-plus"/></svg></td><td class="r">235</td><td>Индикаторы</td><td class="r">0</td><td></td><td></td><td></td></tr>
              <tr><td><svg><use href="#i-folder-plus"/></svg></td><td class="r">139</td><td>Кварцевые резонаторы</td><td class="r">0</td><td></td><td></td><td></td></tr>
              <tr><td><svg><use href="#i-folder-plus"/></svg></td><td class="r">42</td><td>Конденсаторы</td><td class="r">0</td><td></td><td></td><td></td></tr>
              <tr><td><svg><use href="#i-folder-plus"/></svg></td><td class="r">137</td><td>Крепления</td><td class="r">0</td><td></td><td></td><td></td></tr>
              <tr><td><svg><use href="#i-folder-plus"/></svg></td><td class="r">51</td><td>Лампочки</td><td class="r">0</td><td></td><td></td><td></td></tr>
              <tr><td><svg><use href="#i-folder-plus"/></svg></td><td class="r">358</td><td>Микроконтроллеры</td><td class="r">0</td><td></td><td></td><td></td></tr>
              <tr><td><svg><use href="#i-folder-plus"/></svg></td><td class="r">212</td><td>Микропереключатели</td><td class="r">0</td><td></td><td></td><td></td></tr>
              <tr><td><svg><use href="#i-folder-plus"/></svg></td><td class="r">130</td><td>Микросхемы</td><td class="r">0</td><td></td><td></td><td></td></tr>
              <tr><td></td><td></td><td></td><td></td><td></td><td></td><td></td></tr>
            </tbody>
          </table>
        </div>
      </div>
    </form>
  </section>

  <!-- Карточка товара -->
  <section class="top-[409px] left-[833px] h-[331px] w-[568px] border-x-4 border-b-3 bg-[#ebe9ed]">
    <div class="bar -mx-1 rounded-t-[7px] border-t border-t-[#a8ccf4] bg-linear-to-b from-[#4a78bc] to-[#88baf0]">
      <svg><use href="#i-cards"/></svg><h2>Товары:SMD Детали.Диоды.1N4148 (08.01.09)</h2>
      <button class="wb" aria-label="Свернуть"><svg><use href="#i-min"/></svg></button><button class="wb" aria-label="Развернуть"><svg><use href="#i-max"/></svg></button><button class="wb" aria-label="Закрыть окно"><svg><use href="#i-close"/></svg></button>
    </div>
    <div class="tools h-[31px]" role="toolbar" aria-label="Карточка">
      <button aria-label="Описание"><svg><use href="#i-page-help"/></svg></button><button aria-label="Помощь"><svg><use href="#i-cursor-help"/></svg></button>
    </div>
    <form class="flex flex-col pr-[5px] pl-[3px]">
      <div class="mt-[3px] flex items-center"><label for="kod" class="w-[27px]">Код:</label><input id="kod" value="336" class="w-[52px] bg-white text-right"></div>
      <div class="mt-[9px] flex items-center pr-[13px]"><label for="nm" class="w-[96px] text-[#8c1018]">Наим. Р.Детали:</label><input id="nm" value="1N4148" class="flex-1 bg-white"></div>
      <div class="mt-[10px] flex items-start pl-[123px]">
        <fieldset class="h-[75px] w-[110px] border border-[#a0a0a4] pl-[6px] shadow-[1px_1px_0_#fff]">
          <legend class="px-[2px]">Закупка</legend>
          <label for="pr" class="block text-[#800098]">Цена закупочная</label>
          <div class="mt-[6px] flex pl-[1px]"><input id="pr" value="1.50" class="w-[77px] bg-white text-right"><button type="button" class="pick" aria-label="Калькулятор"><svg><use href="#i-calc-mini"/></svg></button></div>
        </fieldset>
        <fieldset class="ml-[10px] h-[75px] w-[110px] border border-[#a0a0a4] pl-[6px] shadow-[1px_1px_0_#fff]">
          <legend class="px-[2px]">Измерение</legend>
          <label for="un" class="block pl-[7px] text-[#000090]">Ед.измерения</label>
          <div class="mt-[6px] flex pl-[17px]"><input id="un" value="шт." class="w-[38px]"><button type="button" class="pick" aria-label="Выбрать единицу">...</button></div>
        </fieldset>
        <div class="ml-[8px] flex w-[91px] flex-col pt-[6px]">
          <label for="ce" class="text-[12px] font-bold text-[#007878]">№ ячейки</label>
          <div class="mt-[3px] flex"><input id="ce" value="TDK" class="w-[44px]"><button type="button" class="pick" aria-label="Выбрать ячейку">...</button><button type="button" class="clear ml-[5px]" aria-label="Очистить ячейку"><svg><use href="#i-x"/></svg></button></div>
        </div>
        <div class="flex flex-col pt-1">
          <label for="ty" class="pl-1 text-[12px] font-bold text-[#007878]">Тип корпуса</label>
          <div class="mt-[5px] flex"><input id="ty" value="1206" class="w-[56px]"><button type="button" class="pick" aria-label="Выбрать тип">...</button><button type="button" class="clear ml-1" aria-label="Очистить тип"><svg><use href="#i-x"/></svg></button></div>
        </div>
      </div>
      <div class="mt-[62px] flex gap-[9px] pl-[5px]">
        <button type="button" class="btn"><svg><use href="#i-check"/></svg><span>Сохранить</span></button>
        <button type="button" class="btn"><svg><use href="#i-x"/></svg><span>Закрыть</span></button>
      </div>
    </form>
  </section>
</main>

<div class="flex h-[30px] shrink-0 items-center gap-[3px] border-t border-b border-t-white border-b-[#a0a0a4] pt-[3px] pb-[1px] pl-[2px] font-['Roboto',sans-serif] text-[13px] [&>button]:flex [&>button]:h-[21px] [&>button]:w-[236px] [&>button]:items-center [&>button]:gap-[1px] [&>button]:border-2 [&>button]:leading-[17px] [&_svg]:size-4">
  <button class="border-t-white border-r-[#8a8a8e] border-b-[#8a8a8e] border-l-white"><svg><use href="#i-doc"/></svg>ЗакупкаДеталей - 16 *</button>
  <button class="border-t-white border-r-[#8a8a8e] border-b-[#8a8a8e] border-l-white"><svg><use href="#i-doc"/></svg>РасходДеталей - 22 *</button>
  <button aria-pressed="true" class="border-t-[#8a8a8e] border-r-white border-b-white border-l-[#8a8a8e] font-['Noto_Sans',sans-serif] font-bold"><svg><use href="#i-catalog"/></svg>Справочник: Товары (08.01.09)</button>
  <button class="border-t-white border-r-[#8a8a8e] border-b-[#8a8a8e] border-l-white"><svg><use href="#i-cards"/></svg>Товары:SMD Детали.Диоды.1N4...</button>
</div>

<footer class="flex h-[15px] shrink-0 items-stretch gap-[2px] border-t border-white pr-[2px] pl-[2px] [&>span]:mt-[1px] [&>span]:border-t [&>span]:border-l [&>span]:border-[#a0a0a4] [&>span]:pl-[2px]">
  <p class="flex-1 pt-[2px]">Для получения подсказки нажмите F1</p>
  <span class="w-[25px]"></span><span class="w-[29px]">NUM</span><span class="w-[149px]">ТА: 30.06.09&nbsp; 00:00:00</span><span class="w-[151px]">БИ: 1 квартал 2009 г.</span><span class="w-[149px]">ТП:</span>
</footer>
</body>
</html>
